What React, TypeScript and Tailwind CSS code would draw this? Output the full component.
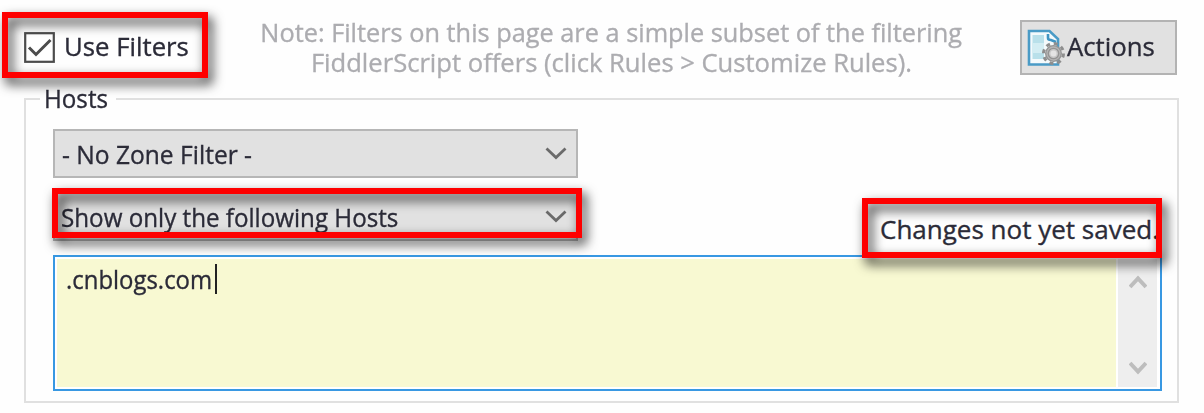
import React from "react";

function Frame({ className }: { className: string }) {
  return (
    <div
      className={`pointer-events-none absolute border-[6px] border-[#fe0000] drop-shadow-[4px_6px_6px_rgba(0,0,0,0.85)] ${className}`}
    />
  );
}

function Chevron() {
  return (
    <svg className="h-[13px] w-[22px] shrink-0" viewBox="0 0 22 13" fill="none" stroke="#6a6a6a" strokeWidth="2.8">
      <path d="M1.5 1.5 L11 10.5 L20.5 1.5" />
    </svg>
  );
}

function Select({ children }: { children: React.ReactNode }) {
  return (
    <div className="flex h-[49px] w-[525px] items-center justify-between border-2 border-[#b6b6b6] bg-[#e1e1e1] pr-[9px]">
      {children}
      <Chevron />
    </div>
  );
}

function ActionsIcon() {
  return (
    <svg className="h-[38px] w-[38px] shrink-0" viewBox="0 0 38 38" fill="none">
      <path d="M2 2 H22.5 L31 10 V35.5 H2 Z" fill="#f4fafc" stroke="#4a9bc6" strokeWidth="2.6" />
      <path d="M5.5 6 H17 V30 H5.5 Z" fill="#b9e0ea" />
      <path d="M5.5 14 H17 V24 H5.5 Z" fill="#d3edf3" />
      <path d="M21 5 V9 Q21 11 24 11 L29 13" stroke="#3f95c3" strokeWidth="2.6" />
      <circle cx="26.5" cy="24.5" r="10" stroke="#8e8e8e" strokeWidth="3" strokeDasharray="4 3.85" />
      <circle cx="26.5" cy="24.5" r="6.5" fill="#c9c9c9" stroke="#949494" strokeWidth="4" />
      <circle cx="26.5" cy="24.5" r="6.5" stroke="#b5b5b5" strokeWidth="1.3" />
      <circle cx="26.5" cy="24.5" r="3" fill="#e4e4e4" />
    </svg>
  );
}

export default function App() {
  return (
    <div className="relative h-[413px] w-[1204px] overflow-hidden bg-[#fefefe] font-['Open_Sans','Noto_Sans',sans-serif] text-[26px] leading-[30px] whitespace-nowrap text-[#2b2b38] [-webkit-text-stroke:0.35px]">
      <header className="flex h-[98px] items-start pl-[24px]">
        <div className="mt-[32px] flex h-[31px] w-[237px] items-center">
          <svg className="h-[31px] w-[31px] shrink-0" viewBox="0 0 31 31" fill="none" stroke="#4c4c4c">
            <rect x="1.2" y="1.2" width="28.6" height="28.6" fill="#fff" strokeWidth="2.2" />
            <path d="M5 15.5 L12 22.5 L26.5 8" strokeWidth="3" />
          </svg>
          <span className="mb-[4px] ml-[9px] origin-left scale-x-[0.99]">Use Filters</span>
        </div>
        <div className="mt-[17px] flex w-[700px] flex-col items-center text-[#acacb0]">
          <p className="scale-x-[0.974]">Note: Filters on this page are a simple subset of the filtering</p>
          <p className="scale-x-[0.984]">FiddlerScript offers (click Rules &gt; Customize Rules).</p>
        </div>
        <button className="mt-[20px] ml-[59px] flex h-[55px] w-[157px] items-center border-2 border-[#b3b3b3] bg-[#e1e1e1] pl-[5px]">
          <ActionsIcon />
          <span className="mb-[3px] ml-[2px] origin-left scale-x-[0.99]">Actions</span>
        </button>
      </header>
      <section className="ml-[24px] h-[305px] w-[1155px] border-2 border-[#e0e0e0] pl-[27px]">
        <div className="-mt-[17px] -ml-[13px] mb-[16px] h-[30px] w-[76px] bg-[#fefefe] pl-[4px]">
          <h2 className="origin-left scale-x-[0.93]">Hosts</h2>
        </div>
        <Select>
          <span className="ml-[7px] origin-left scale-x-[0.945]">- No Zone Filter -</span>
        </Select>
        <div className="mt-[14px] flex h-[49px] w-[1109px] items-start justify-between">
          <Select>
            <span className="ml-[6px] origin-left scale-x-[0.93]">Show only the following Hosts</span>
          </Select>
          <span className="mt-[22px] w-[282px]">Changes not yet saved.</span>
        </div>
        <div className="mt-[14px] flex h-[136px] w-[1109px] border-2 border-[#3898e2] bg-white p-[2px]">
          <div className="flex flex-1 items-start bg-[#f8f9d2] pt-[5px] pl-[9px]">
            <span className="w-[149px] origin-left scale-x-[0.92]">.cnblogs.com</span>
            <span className="h-[30px] w-[2px] bg-[#222]" />
          </div>
          <div className="mr-[1px] ml-[2px] flex w-[39px] flex-col items-center justify-between bg-[#eee] pt-[16px] pb-[12px]">
            <svg className="h-[15px] w-[18px]" viewBox="0 0 18 15" fill="none" stroke="#bdbdbd" strokeWidth="4">
              <path d="M1 12 L9 3.5 L17 12" />
            </svg>
            <svg className="h-[15px] w-[18px]" viewBox="0 0 18 15" fill="none" stroke="#bdbdbd" strokeWidth="4">
              <path d="M1 3 L9 11.5 L17 3" />
            </svg>
          </div>
        </div>
      </section>
      <Frame className="top-[12px] left-[2px] h-[66px] w-[206px]" />
      <Frame className="top-[188px] left-[52px] h-[50px] w-[530px]" />
      <Frame className="top-[198px] left-[862px] h-[60px] w-[300px]" />
    </div>
  );
}
